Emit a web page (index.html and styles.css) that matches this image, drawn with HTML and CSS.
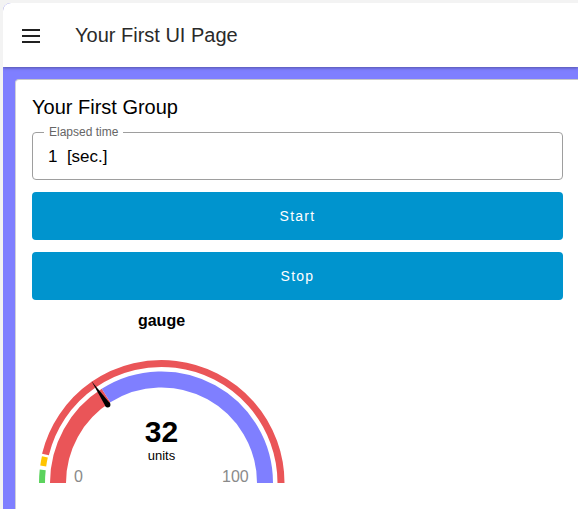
FILE: index.html
```html
<!DOCTYPE html>
<html>
<head>
<meta charset="utf-8">
<link rel="stylesheet" href="styles.css">
</head>
<body>
<div class="frame">
  <header class="topbar">
    <svg class="menu" width="18" height="14" viewBox="0 0 18 14"><rect x="0" y="0" width="18" height="2" fill="#212121"/><rect x="0" y="6" width="18" height="2" fill="#212121"/><rect x="0" y="12" width="18" height="2" fill="#212121"/></svg>
    <span class="page-title">Your First UI Page</span>
  </header>
  <main class="content">
    <section class="card">
      <h2 class="group-title">Your First Group</h2>
      <div class="field">
        <span class="field-label">Elapsed time</span>
        <span class="field-value">1&nbsp;&nbsp;[sec.]</span>
      </div>
      <button class="btn">Start</button>
      <button class="btn">Stop</button>
      <div class="gauge">
        <div class="gauge-title">gauge</div>
        <svg class="gauge-svg" width="260" height="150" viewBox="0 0 260 150">
          <path d="M 10 143 A 119.5 119.5 0 0 1 10.72 129.89" fill="none" stroke="#5bd35d" stroke-width="6"/>
          <path d="M 11.22 125.96 A 119.5 119.5 0 0 1 12.88 116.93" fill="none" stroke="#ffc400" stroke-width="6"/>
          <path d="M 13.45 114.5 A 119.5 119.5 0 0 1 249 143" fill="none" stroke="#ea5558" stroke-width="7"/>
          <path d="M 26 143 A 103.5 103.5 0 0 1 74.04 55.61" fill="none" stroke="#ea5558" stroke-width="16"/>
          <path d="M 74.04 55.61 A 103.5 103.5 0 0 1 233 143" fill="none" stroke="#7f7fff" stroke-width="16"/>
          <polygon points="59.6,41.3 77.9,63.2 73.5,66.2" fill="#000"/>
          <circle cx="75.7" cy="64.7" r="2.7" fill="#000"/>
          <text x="129.5" y="102" class="g-value" text-anchor="middle">32</text>
          <text x="129.5" y="120" class="g-units" text-anchor="middle">units</text>
          <text x="42" y="142" class="g-limit">0</text>
          <text x="190" y="142" class="g-limit">100</text>
        </svg>
      </div>
    </section>
  </main>
</div>
</body>
</html>
```
FILE: styles.css
```css
html, body {
  margin: 0;
  padding: 0;
}
body {
  background: #f3f3f3;
  font-family: "Liberation Sans", Arial, sans-serif;
  overflow: hidden;
  width: 578px;
  height: 509px;
}
.frame {
  margin: 3px 0 0 3px;
  width: 575px;
  height: 506px;
  background: #7f7fff;
  border-top-left-radius: 8px;
  overflow: hidden;
  display: flex;
  flex-direction: column;
}
.topbar {
  height: 64px;
  flex: none;
  background: #fff;
  display: flex;
  align-items: center;
  box-shadow: 0 1px 3px rgba(0, 0, 0, 0.35);
  position: relative;
  z-index: 1;
}
.menu {
  margin-left: 19px;
  margin-top: 1px;
}
.page-title {
  margin-left: 35px;
  font-size: 20px;
  color: #2a2a2a;
  line-height: 23px;
}
.content {
  padding: 12px 0 0 12px;
  flex: 1;
  display: flex;
  flex-direction: column;
  min-height: 0;
}
.card {
  flex: 1;
  padding: 16px 15px 0 16px;
  background: #fff;
  border: 1px solid #cfcfd8;
  border-top-color: #c8c8c8;
  border-right: none;
  border-bottom: none;
  border-radius: 4px 0 0 0;
  display: flex;
  flex-direction: column;
}
.group-title {
  margin: 0;
  font-weight: normal;
  font-size: 20px;
  line-height: 23px;
  color: #000;
}
.field {
  margin-top: 13px;
  height: 46px;
  flex: none;
  border: 1px solid #9e9e9e;
  border-radius: 4px;
  position: relative;
  display: flex;
  align-items: center;
  padding-left: 15px;
}
.field-label {
  position: absolute;
  left: 11px;
  top: -8px;
  padding: 0 5px;
  background: #fff;
  font-size: 12px;
  line-height: 14px;
  color: #666;
}
.field-value {
  font-size: 17px;
  color: #000;
  margin-top: 2px;
}
.btn {
  margin-top: 12px;
  height: 48px;
  flex: none;
  border: none;
  border-radius: 4px;
  background: #0094ce;
  color: #fff;
  font-family: "Liberation Sans", Arial, sans-serif;
  font-size: 14px;
  letter-spacing: 1.25px;
  padding: 0;
}
.gauge {
  width: 259px;
  margin-top: 12px;
  display: flex;
  flex-direction: column;
  align-items: center;
}
.gauge-title {
  font-size: 16px;
  font-weight: bold;
  line-height: 18px;
  color: #000;
}
.gauge-svg {
  display: block;
  margin-top: 10px;
  align-self: flex-start;
}
.g-value {
  font-family: "Liberation Sans", Arial, sans-serif;
  font-size: 30px;
  font-weight: bold;
  fill: #000;
}
.g-units {
  font-family: "Liberation Sans", Arial, sans-serif;
  font-size: 13px;
  fill: #000;
}
.g-limit {
  font-family: "Liberation Sans", Arial, sans-serif;
  font-size: 16px;
  fill: #8a8a8a;
}
```
